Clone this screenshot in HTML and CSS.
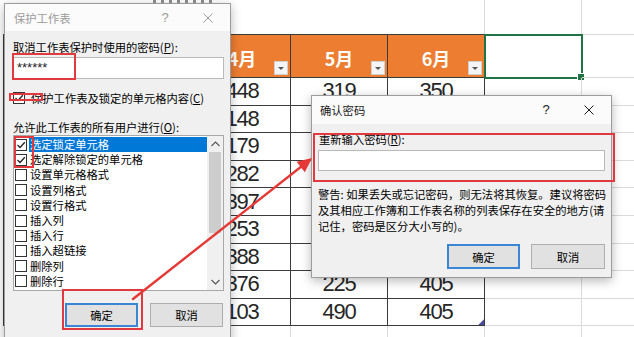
FILE: index.html
```html
<!DOCTYPE html>
<html lang="zh-CN">
<head>
<meta charset="utf-8">
<title>保护工作表</title>
<link rel="stylesheet" href="styles.css">
</head>
<body>
<div class="screen">
  <div class="sheet">
    <div class="cell title"><div class="title-strip"></div></div>
    <div class="cell"></div>
    <div class="cell"></div>

    <div class="cell tb hd first">产品<span class="dd"></span></div>
    <div class="cell tb hd">3月<span class="dd"></span></div>
    <div class="cell tb hd">4月<span class="dd"></span></div>
    <div class="cell tb hd">5月<span class="dd"></span></div>
    <div class="cell tb hd">6月<span class="dd"></span></div>
    <div class="cell sel"></div>
    <div class="cell"></div>

    <div class="cell tb num first">A01</div><div class="cell tb num">312</div><div class="cell tb num">448</div><div class="cell tb num">319</div><div class="cell tb num">350</div><div class="cell"></div><div class="cell"></div>
    <div class="cell tb num first">A02</div><div class="cell tb num">205</div><div class="cell tb num">148</div><div class="cell tb num">268</div><div class="cell tb num">299</div><div class="cell"></div><div class="cell"></div>
    <div class="cell tb num first">A03</div><div class="cell tb num">436</div><div class="cell tb num">179</div><div class="cell tb num">452</div><div class="cell tb num">368</div><div class="cell"></div><div class="cell"></div>
    <div class="cell tb num first">A04</div><div class="cell tb num">158</div><div class="cell tb num">282</div><div class="cell tb num">331</div><div class="cell tb num">415</div><div class="cell"></div><div class="cell"></div>
    <div class="cell tb num first">A05</div><div class="cell tb num">271</div><div class="cell tb num">397</div><div class="cell tb num">187</div><div class="cell tb num">236</div><div class="cell"></div><div class="cell"></div>
    <div class="cell tb num first">A06</div><div class="cell tb num">389</div><div class="cell tb num">253</div><div class="cell tb num">406</div><div class="cell tb num">372</div><div class="cell"></div><div class="cell"></div>
    <div class="cell tb num first">A07</div><div class="cell tb num">224</div><div class="cell tb num">388</div><div class="cell tb num">274</div><div class="cell tb num">318</div><div class="cell"></div><div class="cell"></div>
    <div class="cell tb num first">A08</div><div class="cell tb num">347</div><div class="cell tb num">376</div><div class="cell tb num">225</div><div class="cell tb num">405</div><div class="cell"></div><div class="cell"></div>
    <div class="cell tb num first">A09</div><div class="cell tb num">196</div><div class="cell tb num">103</div><div class="cell tb num">490</div><div class="cell tb num corner">405</div><div class="cell"></div><div class="cell"></div>

    <div class="cell first-light"></div><div class="cell"></div><div class="cell"></div><div class="cell"></div><div class="cell"></div><div class="cell"></div><div class="cell"></div>
  </div>

  <!-- 保护工作表 dialog -->
  <div class="dlg protect">
    <div class="titlebar inactive">
      <span class="tb-title">保护工作表</span>
      <span class="tb-help">?</span>
      <span class="tb-close"><svg width="10" height="10" viewBox="0 0 10 10"><path d="M0.5 0.5 L9.5 9.5 M9.5 0.5 L0.5 9.5" stroke="currentColor" stroke-width="1" fill="none"/></svg></span>
    </div>
    <div class="dbody">
      <div class="lbl l1">取消工作表保护时使用的密码(<u>P</u>):</div>
      <div class="field pw">******</div>
      <div class="checkrow">
        <span class="chk"><svg width="10" height="10" viewBox="0 0 10 10"><path d="M1.5 5 L4 7.5 L8.8 2.2" stroke="#222" stroke-width="1.3" fill="none"/></svg></span>
        <span>保护工作表及锁定的单元格内容(<u>C</u>)</span>
      </div>
      <div class="lbl l2">允许此工作表的所有用户进行(<u>O</u>):</div>
      <div class="listbox">
        <div class="items">
          <div class="item"><span class="chk"><svg width="10" height="10" viewBox="0 0 10 10"><path d="M1.5 5 L4 7.5 L8.8 2.2" stroke="#222" stroke-width="1.3" fill="none"/></svg></span><span class="itxt active">选定锁定单元格</span></div>
          <div class="item"><span class="chk"><svg width="10" height="10" viewBox="0 0 10 10"><path d="M1.5 5 L4 7.5 L8.8 2.2" stroke="#222" stroke-width="1.3" fill="none"/></svg></span><span class="itxt">选定解除锁定的单元格</span></div>
          <div class="item"><span class="chk"></span><span class="itxt">设置单元格格式</span></div>
          <div class="item"><span class="chk"></span><span class="itxt">设置列格式</span></div>
          <div class="item"><span class="chk"></span><span class="itxt">设置行格式</span></div>
          <div class="item"><span class="chk"></span><span class="itxt">插入列</span></div>
          <div class="item"><span class="chk"></span><span class="itxt">插入行</span></div>
          <div class="item"><span class="chk"></span><span class="itxt">插入超链接</span></div>
          <div class="item"><span class="chk"></span><span class="itxt">删除列</span></div>
          <div class="item"><span class="chk"></span><span class="itxt">删除行</span></div>
        </div>
        <div class="scroll">
          <div class="sbtn"><svg width="9" height="6" viewBox="0 0 9 6"><path d="M0.5 5 L4.5 1 L8.5 5" stroke="#555" stroke-width="1.1" fill="none"/></svg></div>
          <div class="thumb"></div>
          <div class="track"></div>
          <div class="sbtn"><svg width="9" height="6" viewBox="0 0 9 6"><path d="M0.5 1 L4.5 5 L8.5 1" stroke="#555" stroke-width="1.1" fill="none"/></svg></div>
        </div>
      </div>
      <div class="btnrow p-btns">
        <div class="btn default">确定</div>
        <div class="btn">取消</div>
      </div>
    </div>
    <div class="redbox rb-pw"></div>
    <div class="redbox rb-chk"></div>
    <div class="redbox rb-list"></div>
    <div class="redbox rb-ok"></div>
  </div>

  <!-- 确认密码 dialog -->
  <div class="dlg confirm">
    <div class="titlebar">
      <span class="tb-title">确认密码</span>
      <span class="tb-help">?</span>
      <span class="tb-close"><svg width="10" height="10" viewBox="0 0 10 10"><path d="M0.5 0.5 L9.5 9.5 M9.5 0.5 L0.5 9.5" stroke="currentColor" stroke-width="1" fill="none"/></svg></span>
    </div>
    <div class="dbody cbody">
      <div class="lbl c1">重新输入密码(<u>R</u>):</div>
      <div class="field cf"></div>
      <div class="warn">警告: 如果丢失或忘记密码，则无法将其恢复。建议将密码<br>及其相应工作簿和工作表名称的列表保存在安全的地方(请<br>记住，密码是区分大小写的)。</div>
      <div class="btnrow c-btns">
        <div class="btn default">确定</div>
        <div class="btn wide">取消</div>
      </div>
    </div>
    <div class="redbox rb-confirm"></div>
  </div>

  <svg class="arrow" width="634" height="337" viewBox="0 0 634 337">
    <line x1="133" y1="299" x2="302" y2="166" stroke="#e53935" stroke-width="2.4" stroke-linecap="round"/>
    <polygon points="312,158 304.8,172.2 296.6,161.8" fill="#e53935"/>
  </svg>
</div>
</body>
</html>
```

FILE: styles.css
```css
* { box-sizing: border-box; margin: 0; padding: 0; }
html, body { width: 634px; height: 337px; overflow: hidden; background: #fff; }
body { font-family: "Noto Sans CJK SC", "Noto Sans", sans-serif; color: #000; }

.screen { position: relative; width: 634px; height: 337px; overflow: hidden; }

/* ---------- spreadsheet ---------- */
.sheet {
  display: grid;
  grid-template-columns: 94px repeat(5, 97px) 60px;
  grid-template-rows: 35px 43px repeat(9, 27.6px) 40px;
  padding-left: 3px;
}
.cell {
  border-right: 1px solid #dadada;
  border-bottom: 1px solid #dadada;
  display: flex;
  align-items: center;
  justify-content: center;
  position: relative;
}
.title {
  grid-column: 1 / 6;
  border-bottom-color: #3b3b3b;
  align-items: flex-start;
  justify-content: flex-start;
  padding-left: 150px;
}
/* bottom edge of the sheet title glyphs (scrolled out of view) */
.title-strip {
  width: 62px;
  height: 3px;
  background: repeating-linear-gradient(90deg, #444 0 3px, transparent 3px 8px);
  opacity: 0.6;
}
.tb { border-right-color: #3b3b3b; border-bottom-color: #3b3b3b; }
.first { border-left: 1px solid #3b3b3b; }
.hd {
  background: #ed7d31;
  color: #fff;
  font-weight: bold;
  font-size: 18px;
  padding-top: 3px;
}
.dd {
  position: absolute;
  right: 2px;
  bottom: 2px;
  width: 14px;
  height: 14px;
  background: #f4f4f4;
  border: 1px solid #d0d0d0;
  display: flex;
  align-items: center;
  justify-content: center;
}
.dd::before {
  content: "";
  border-left: 3px solid transparent;
  border-right: 3px solid transparent;
  border-top: 3px solid #555;
}
.num {
  font-family: "Liberation Sans", Arial, sans-serif;
  font-size: 22px;
  letter-spacing: -1.2px;
  color: #262626;
}
.sel {
  outline: 2px solid #217346;
  outline-offset: -1px;
}
.sel::after {
  content: "";
  position: absolute;
  right: -4px;
  bottom: -4px;
  width: 6px;
  height: 6px;
  background: #217346;
  border: 1px solid #fff;
}
.corner::after {
  content: "";
  position: absolute;
  right: 0;
  bottom: 0;
  width: 6px;
  height: 6px;
  background: #4b4b9e;
  clip-path: polygon(100% 0, 100% 100%, 0 100%);
}

/* ---------- dialogs ---------- */
.dlg {
  position: absolute;
  background: #f0f0f0;
  border: 1px solid #9c9c9c;
  box-shadow: 0 3px 10px rgba(0, 0, 0, 0.28);
  font-size: 11.3px;
  line-height: 16px;
  display: flex;
  flex-direction: column;
}
.protect { left: 4px; top: 3px; width: 227px; height: 345px; }
.confirm { left: 311px; top: 95px; width: 301px; height: 183px; }

.titlebar {
  height: 28px;
  background: #fbfbfb;
  display: flex;
  align-items: center;
  padding-left: 8px;
  color: #1a1a1a;
  flex: none;
}
.protect .titlebar { padding-left: 9px; height: 27px; }
.titlebar.inactive { color: #9a9a9a; }
.tb-title { flex: 1; font-size: 11.3px; }
.tb-help {
  font-family: "Liberation Sans", Arial, sans-serif;
  font-size: 13px;
  width: 10px;
  text-align: center;
}
.tb-close {
  width: 10px;
  height: 10px;
  margin-left: 33px;
  margin-right: 17px;
  display: flex;
}

.dbody { padding: 0 6px 0 8px; display: flex; flex-direction: column; }
.lbl { white-space: nowrap; }
.lbl u { text-decoration: underline; }
.l1 { margin-top: 8px; }
.field {
  background: #fff;
  border: 1px solid #b9b9b9;
  flex: none;
}
.pw {
  margin-top: 2px;
  height: 22px;
  font-family: "Liberation Sans", Arial, sans-serif;
  font-size: 13px;
  line-height: 20px;
  padding-left: 3px;
  color: #222;
}
.checkrow {
  margin-top: 11px;
  display: flex;
  align-items: center;
  height: 16px;
  white-space: nowrap;
}
.checkrow .chk { margin-right: 6px; }
.chk {
  width: 12px;
  height: 12px;
  flex: none;
  background: #fff;
  border: 1px solid #333;
  display: flex;
  align-items: center;
  justify-content: center;
}
.l2 { margin-top: 13px; }

.listbox {
  height: 156px;
  background: #fff;
  border: 1px solid #a8a8a8;
  display: flex;
  flex: none;
}
.items { flex: 1; padding-top: 1px; padding-left: 1px; }
.item {
  height: 15.2px;
  display: flex;
  align-items: center;
  white-space: nowrap;
}
.itxt {
  flex: 1;
  height: 100%;
  margin-left: 2px;
  padding-left: 1px;
  line-height: 15px;
}
.itxt.active { background: #0078d7; color: #fff; }
.scroll {
  width: 16px;
  background: #f0f0f0;
  display: flex;
  flex-direction: column;
  align-items: center;
}
.sbtn {
  width: 16px;
  height: 16px;
  display: flex;
  align-items: center;
  justify-content: center;
  flex: none;
}
.thumb { width: 12px; height: 81px; background: #cdcdcd; flex: none; }
.track { flex: 1; }

.btnrow {
  display: flex;
  justify-content: flex-end;
  flex: none;
}
.p-btns { margin-top: 12px; gap: 12px; padding-right: 1px; }
.btn {
  width: 73px;
  height: 24px;
  background: #e1e1e1;
  border: 1px solid #adadad;
  display: flex;
  align-items: center;
  justify-content: center;
  font-size: 11.3px;
}
.btn.default { border: 2px solid #3a86d5; }

.cbody { padding: 0 6px 0 6px; }
.c1 { margin-top: 7px; padding-left: 1px; }
.cf { margin-top: 3px; height: 21px; }
.warn { margin-top: 15px; white-space: nowrap; line-height: 16px; }
.c-btns { margin-top: 10px; gap: 11px; }
.c-btns .btn { height: 25px; }
.c-btns .wide { width: 74px; }

/* ---------- annotations ---------- */
.redbox {
  position: absolute;
  border: 2px solid #e0393e;
  pointer-events: none;
}
.rb-pw { left: 7px; top: 49px; width: 64px; height: 27px; }
.rb-chk { left: 4px; top: 89px; width: 34px; height: 8px; }
.rb-list { left: 9px; top: 132px; width: 20px; height: 32px; }
.rb-ok { left: 57px; top: 285px; width: 81px; height: 41px; }
.rb-confirm { left: 1px; top: 37px; width: 302px; height: 49px; }

.arrow { position: absolute; left: 0; top: 0; pointer-events: none; }
```
